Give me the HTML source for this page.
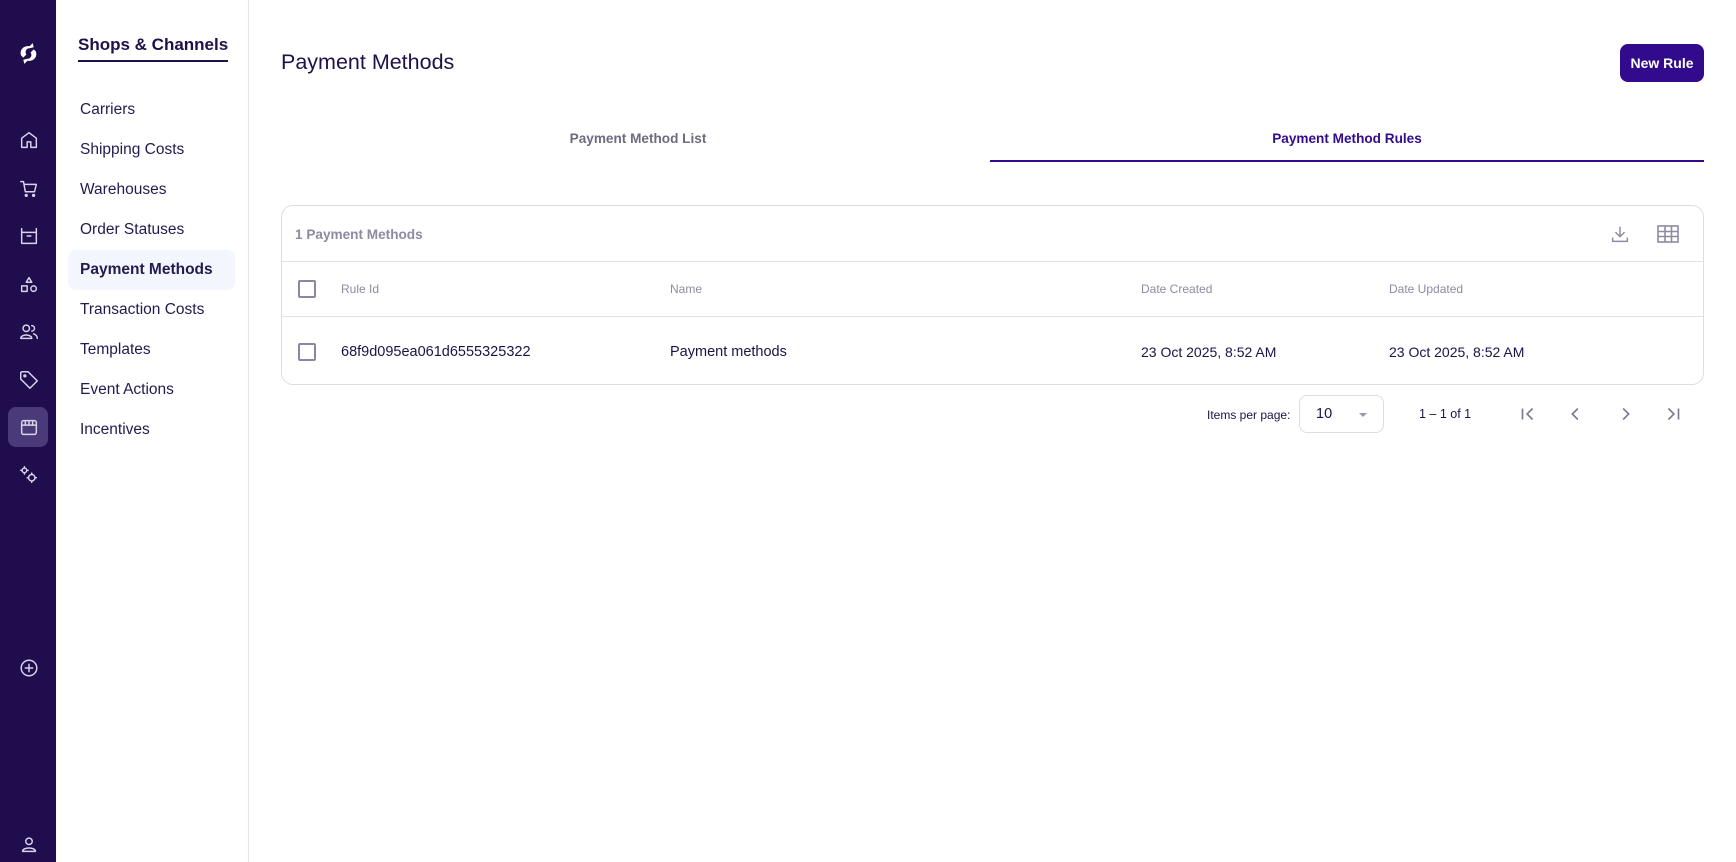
<!DOCTYPE html>
<html><head><meta charset="utf-8">
<style>
*{box-sizing:border-box;margin:0;padding:0}
body{width:1736px;height:862px;overflow:hidden;background:#fff;font-family:"Liberation Sans",sans-serif;color:#1d1148;position:relative}
.rail{position:absolute;left:0;top:0;width:56px;height:862px;background:#200d4d}
.rail svg{position:absolute;left:18px;width:22px;height:22px;fill:none;stroke:#d9d3ea;stroke-width:1.6;stroke-linecap:round;stroke-linejoin:round}
.act{position:absolute;left:8px;top:407px;width:40px;height:40px;border-radius:8px;background:#4a3a7a}
.nav{position:absolute;left:56px;top:0;width:193px;height:862px;border-right:1px solid #e6e4ee}
.nav h2{position:absolute;left:22px;top:35px;font-size:17px;font-weight:bold;color:#1d1148;padding-bottom:5px;border-bottom:2.5px solid #1d1148;white-space:nowrap}
.nav .it{position:absolute;left:12px;width:167px;height:40px;line-height:40px;padding-left:12px;font-size:15.5px;color:#241a4f;border-radius:8px}
.nav .it.on{background:#f3f7fd;font-weight:bold}
.title{position:absolute;left:281px;top:50px;font-size:21.5px;color:#1d1148}
.btn{position:absolute;left:1620px;top:44px;width:84px;height:38px;border-radius:8px;background:#320b8c;color:#fff;font-weight:bold;font-size:14px;text-align:center;line-height:38px}
.tab{position:absolute;top:131px;font-size:13.6px;font-weight:bold;text-align:center;width:714px}
.card{position:absolute;left:281px;top:205px;width:1423px;height:180px;border:1px solid #dedcec;border-radius:12px}
.hr{position:absolute;left:0;right:0;height:1px;background:#e2e0ee}
.cb{position:absolute;left:16px;width:18px;height:18px;border:2px solid #8c86a4;border-radius:2px}
.t{position:absolute;white-space:nowrap}
.pg svg{position:absolute;top:403px;width:22px;height:22px;fill:none;stroke:#7d7895;stroke-width:1.8}
</style></head><body>
<div class="rail">
 <svg style="top:41px;left:16px;width:25px;height:25px" viewBox="0 0 24 24"><path d="M16 2 L13 5 C7 4 3 9 5 14 L7 16 L10 13 C8 10 10 7 13 7 L17 6 Z M8 22 L11 19 C17 20 21 15 19 10 L17 8 L14 11 C16 14 14 17 11 17 L7 18 Z" fill="#fff" stroke="none"/></svg>
 <svg style="top:129px" viewBox="0 0 24 24"><path d="M4 10 L12 4 L20 10 V20 H14 V14 H10 V20 H4 Z"/></svg>
 <svg style="top:178px" viewBox="0 0 24 24"><path d="M3 4 H6 L8 15 H18 L20 7 H7"/><circle cx="9" cy="19" r="1"/><circle cx="17" cy="19" r="1"/></svg>
 <svg style="top:225px" viewBox="0 0 24 24"><path d="M4 4 L4 20 H20 V4 M4 8 H20 M10 12 H14"/></svg>
 <svg style="top:274px" viewBox="0 0 24 24"><path d="M12 4 L15 9 H9 Z"/><rect x="4" y="13" width="6" height="6"/><circle cx="17" cy="16" r="3"/></svg>
 <svg style="top:321px" viewBox="0 0 24 24"><circle cx="9" cy="8" r="3.5"/><path d="M3 19 C3 14 15 14 15 19 Z M15 5 A3 3 0 0 1 15 11 M17 14 C20 15 21 17 21 19"/></svg>
 <svg style="top:369px" viewBox="0 0 24 24"><path d="M3 4 V11 L13 21 L21 13 L11 3 H4 Z"/><circle cx="7.5" cy="7.5" r="1"/></svg>
 <div class="act"></div>
 <svg style="top:416px" viewBox="0 0 24 24"><rect x="4" y="5" width="16" height="15" rx="2"/><path d="M4 10 H20 M8 5 V10 M12 5 V10 M16 5 V10"/></svg>
 <svg style="top:464px" viewBox="0 0 24 24"><circle cx="7" cy="7" r="2.5"/><circle cx="15" cy="15" r="3.5"/><path d="M7 3 V4 M7 10 V11 M3 7 H4 M10 7 H11 M15 10 V11 M15 19 V20 M10 15 H11 M19 15 H20"/></svg>
 <svg style="top:657px" viewBox="0 0 24 24"><circle cx="12" cy="12" r="8.5"/><path d="M12 8 V16 M8 12 H16"/></svg>
 <svg style="top:834px" viewBox="0 0 24 24"><circle cx="12" cy="8" r="3.5"/><path d="M5 19 C5 14 19 14 19 19 Z"/></svg>
</div>
<div class="nav">
 <h2>Shops &amp; Channels</h2>
 <div class="it" style="top:90px">Carriers</div>
 <div class="it" style="top:130px">Shipping Costs</div>
 <div class="it" style="top:170px">Warehouses</div>
 <div class="it" style="top:210px">Order Statuses</div>
 <div class="it on" style="top:250px">Payment Methods</div>
 <div class="it" style="top:290px">Transaction Costs</div>
 <div class="it" style="top:330px">Templates</div>
 <div class="it" style="top:370px">Event Actions</div>
 <div class="it" style="top:410px">Incentives</div>
</div>
<div class="title">Payment Methods</div>
<div class="btn">New Rule</div>
<div class="tab" style="left:281px;color:#6e6a80">Payment Method List</div>
<div class="tab" style="left:990px;color:#320b8c">Payment Method Rules</div>
<div style="position:absolute;left:990px;top:160px;width:714px;height:2px;background:#320b8c"></div>
<div class="card">
 <div class="t" style="left:13px;top:21px;font-size:13.6px;font-weight:bold;color:#8e8aa2">1 Payment Methods</div>
 <svg style="position:absolute;left:1327px;top:17px;width:22px;height:22px;fill:none;stroke:#8e8aa2;stroke-width:1.6" viewBox="0 0 24 24"><path d="M12 4 V15 M7 10 L12 15 L17 10 M4 16 V20 H20 V16"/></svg>
 <svg style="position:absolute;left:1374px;top:17px;width:24px;height:22px;fill:none;stroke:#8e8aa2;stroke-width:1.6" viewBox="0 0 24 22"><rect x="2" y="3" width="20" height="16"/><path d="M2 8.5 H22 M2 13.5 H22 M9 3 V19 M15.5 3 V19"/></svg>
 <div class="hr" style="top:55px"></div>
 <div class="cb" style="top:74px"></div>
 <div class="t" style="left:59px;top:76px;font-size:12px;color:#8e8aa2">Rule Id</div>
 <div class="t" style="left:388px;top:76px;font-size:12px;color:#8e8aa2">Name</div>
 <div class="t" style="left:859px;top:76px;font-size:12px;color:#8e8aa2">Date Created</div>
 <div class="t" style="left:1107px;top:76px;font-size:12px;color:#8e8aa2">Date Updated</div>
 <div class="hr" style="top:110px"></div>
 <div class="cb" style="top:137px"></div>
 <div class="t" style="left:59px;top:138px;font-size:14.5px">68f9d095ea061d6555325322</div>
 <div class="t" style="left:388px;top:138px;font-size:14.5px">Payment methods</div>
 <div class="t" style="left:859px;top:138px;font-size:14px">23 Oct 2025, 8:52 AM</div>
 <div class="t" style="left:1107px;top:138px;font-size:14px">23 Oct 2025, 8:52 AM</div>
</div>
<div class="t" style="left:1207px;top:408px;font-size:12px">Items per page:</div>
<div style="position:absolute;left:1299px;top:395px;width:85px;height:38px;border:1px solid #dedcec;border-radius:8px">
 <div class="t" style="left:16px;top:10px;font-size:14.5px">10</div>
 <div style="position:absolute;left:59px;top:17px;border-left:4px solid transparent;border-right:4px solid transparent;border-top:4px solid #9a96ad"></div>
</div>
<div class="t" style="left:1419px;top:407px;font-size:12.5px">1 – 1 of 1</div>
<div class="pg">
 <svg style="left:1517px" viewBox="0 0 24 24"><path d="M6 6 V18 M17 6 L11 12 L17 18"/></svg>
 <svg style="left:1565px" viewBox="0 0 24 24"><path d="M14 6 L8 12 L14 18"/></svg>
 <svg style="left:1614px" viewBox="0 0 24 24"><path d="M10 6 L16 12 L10 18"/></svg>
 <svg style="left:1662px" viewBox="0 0 24 24"><path d="M18 6 V18 M7 6 L13 12 L7 18"/></svg>
</div>
</body></html>
